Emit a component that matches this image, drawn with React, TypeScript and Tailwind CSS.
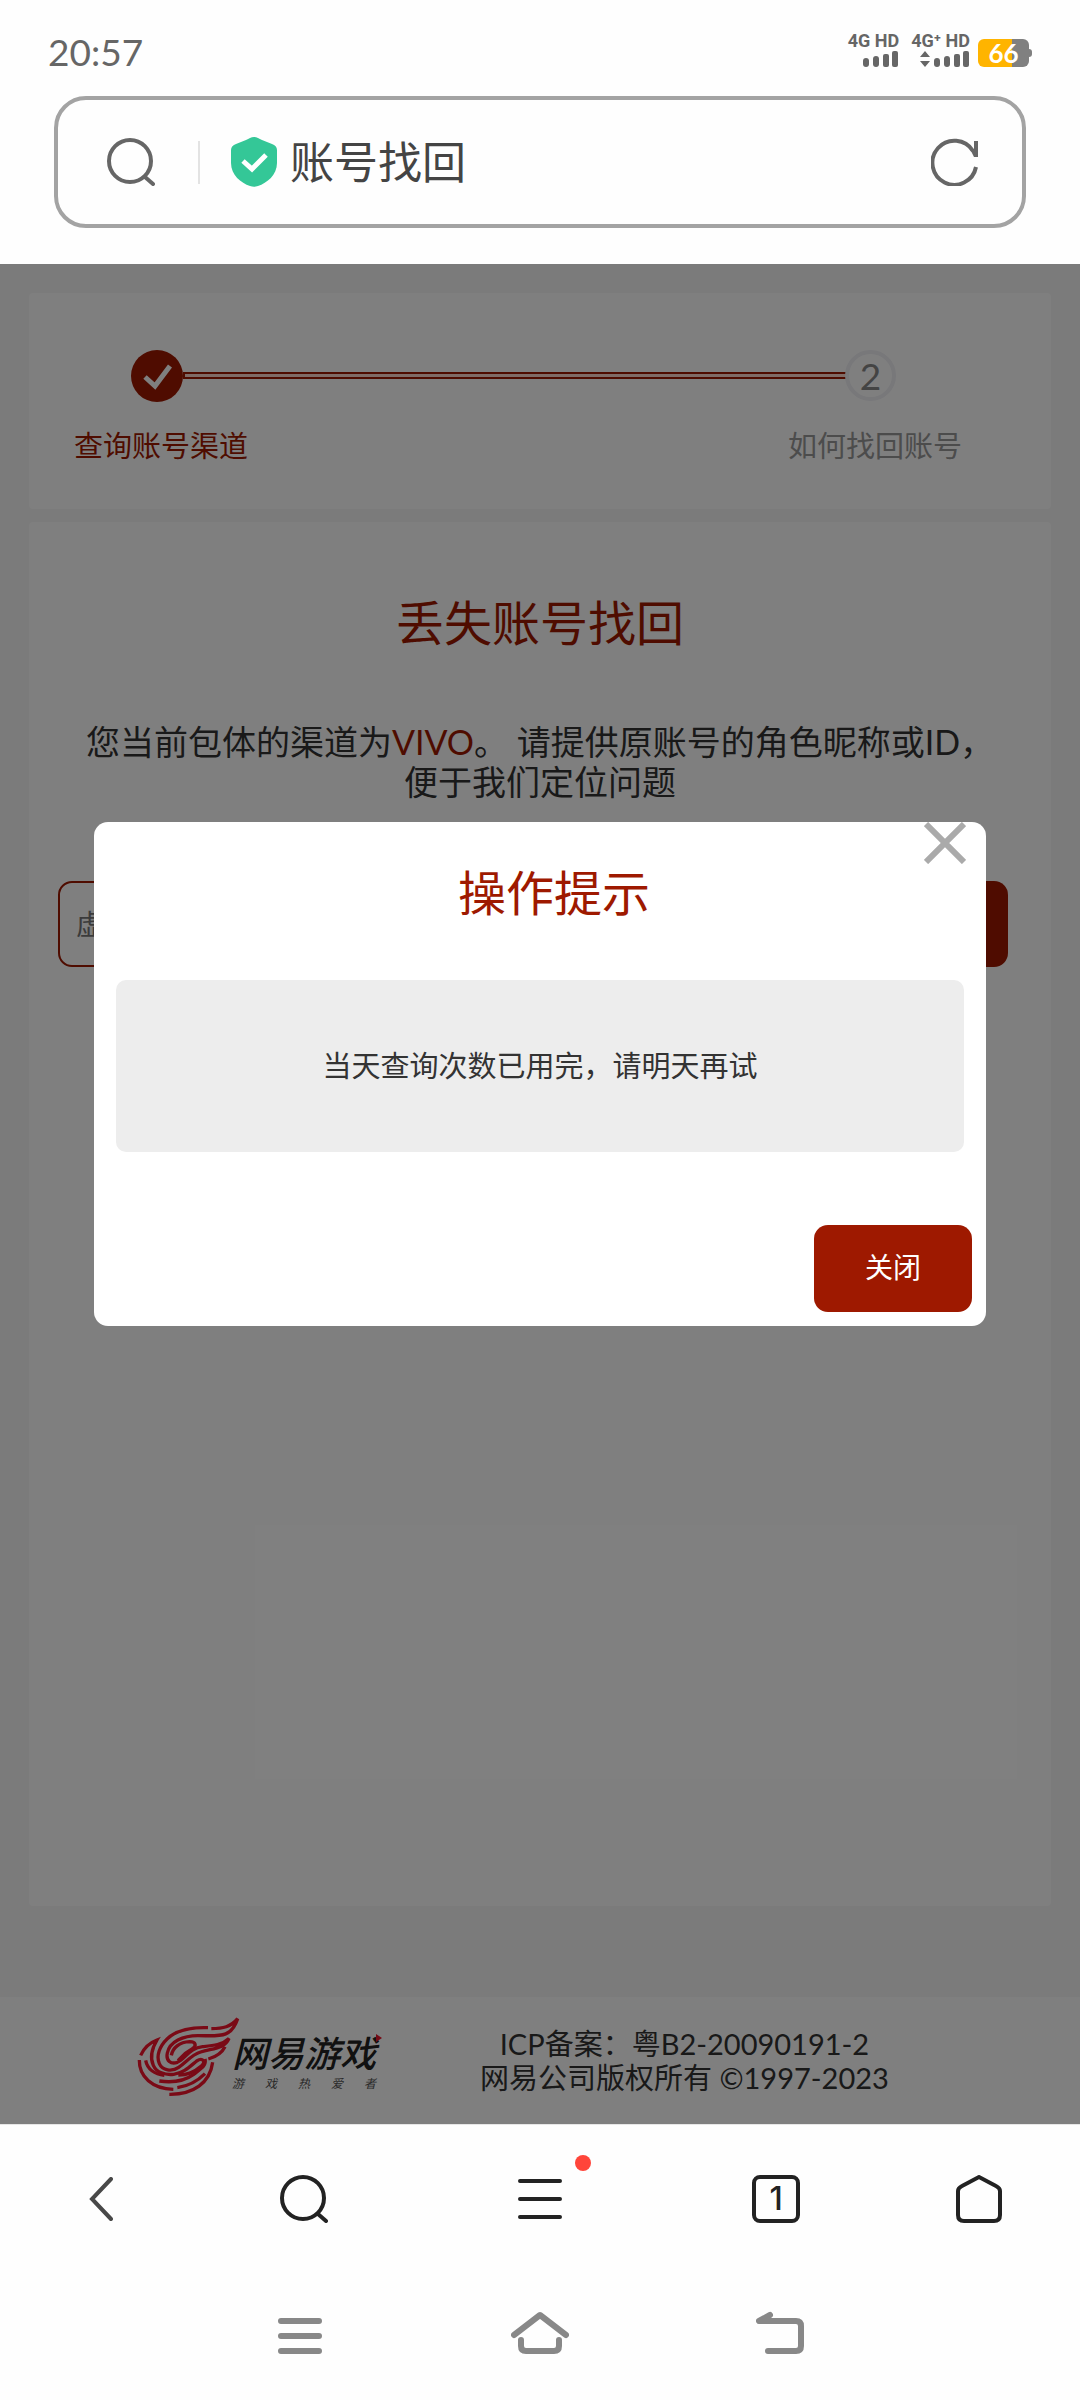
import React, { useState } from 'react';

const fontStack = "font-['Lato','Noto_Sans_CJK_SC',sans-serif]";

const SignalBars: React.FC = () => (
  <svg width="36" height="16" viewBox="0 0 36 16" fill="#666">
    <rect x="0" y="7" width="6" height="9" rx="3" />
    <rect x="10" y="5" width="6" height="11" rx="3" />
    <rect x="20" y="3" width="6" height="13" rx="2" />
    <rect x="29" y="0" width="6" height="16" rx="2" />
  </svg>
);

const StatusBar: React.FC = () => (
  <div className="flex items-start justify-between pt-8 pr-12 pl-12 text-[#666]">
    <span className="text-[37px] leading-10">20:57</span>
    <div className="flex items-start gap-3 font-['Roboto',sans-serif] text-lg leading-[18px] font-bold">
      <div className="flex flex-col items-end gap-px">
        <span>4G HD</span>
        <SignalBars />
      </div>
      <div className="flex flex-col items-end gap-px">
        <span>4G⁺ HD</span>
        <div className="flex items-center gap-1">
          <svg width="10" height="16" viewBox="0 0 10 16" fill="#666">
            <path d="M5 0 10 6H0ZM5 16 0 10h10Z" />
          </svg>
          <SignalBars />
        </div>
      </div>
      <div className="mt-[7px] -ml-1 flex items-center">
        <div className="flex h-7 w-[51px] items-center justify-center rounded-md bg-linear-to-r from-[#ffb400] from-66% to-[#808080] to-66% font-['Lato',sans-serif] text-[26px] text-white">
          66
        </div>
        <div className="h-2 w-[3px] rounded-r-sm bg-[#808080]" />
      </div>
    </div>
  </div>
);

const SearchIcon: React.FC<{ color: string }> = ({ color }) => (
  <svg width="48" height="48" viewBox="0 0 48 48" fill="none" stroke={color} strokeWidth="4" strokeLinecap="round">
    <circle cx="23" cy="23" r="21" />
    <path d="m38 39 8 7" />
  </svg>
);

const AddressBar: React.FC = () => (
  <div className="mx-[54px] mt-6 mb-9 flex h-[132px] items-center rounded-[32px] border-4 border-[#a3a3a3] pr-[43px] pl-[49px]">
    <button type="button" aria-label="搜索">
      <SearchIcon color="#666" />
    </button>
    <div className="ml-[43px] h-[43px] w-0.5 bg-[#e3e3e3]" />
    <svg className="ml-[31px]" width="46" height="50" viewBox="0 0 46 50">
      <path d="M23 0c3 0 5 1.500 8 3l10 4c3 1 5 3 5 6v13c0 12-10 20-19 23-3 1-5 1-8 0C10 46 0 38 0 26V13c0-3 2-5 5-6l10-4c3-1.500 5-3 8-3Z" fill="#34c797" />
      <path d="m12 24 9 8 14-14" fill="none" stroke="#fff" strokeWidth="5" />
    </svg>
    <span className="ml-[13px] flex-1 text-[44px] leading-[48px] text-[#444]">账号找回</span>
    <button type="button" aria-label="刷新">
      <svg width="48" height="48" viewBox="0 0 48 48" fill="none" stroke="#666" strokeWidth="4">
        <path d="M45 29A22 22 0 1 1 42 13" />
        <path d="M43 3h4v16h-4l-4-8 4 1Z" fill="#666" stroke="none" />
      </svg>
    </button>
  </div>
);

const Steps: React.FC = () => (
  <ol className="mx-[29px] mt-[29px] flex h-[216px] justify-between rounded-sm bg-white px-[45px] pt-[57px] text-[29px] leading-8">
    <li className="flex w-[174px] flex-none flex-col text-[#9e1900]">
      <div className="flex items-center pl-[57px]">
        <svg className="flex-none" width="52" height="52" viewBox="0 0 52 52">
          <circle cx="26" cy="26" r="26" fill="#9e1900" />
          <path d="m14 27 10 9 15-20" fill="none" stroke="#fff" strokeWidth="5" />
        </svg>
      </div>
      <span className="mt-7">查询账号渠道</span>
    </li>
    <li aria-hidden="true" className="mt-[22px] -mr-[60px] -ml-[65px] h-[7px] flex-1 border-2 border-[#9e1900] bg-[#ffd9cf]" />
    <li className="mr-11 flex w-[174px] flex-none flex-col text-[#999]">
      <div className="ml-[57px] flex size-[51px] items-center justify-center rounded-full border-4 border-[#f0f0f5] text-[37px] leading-10 text-[#888]">
        2
      </div>
      <span className="mt-[29px]">如何找回账号</span>
    </li>
  </ol>
);

const FlameLogo: React.FC = () => (
  <svg width="116" height="92" viewBox="0 0 348 276" fill="none" stroke="#f5142c" strokeWidth="10">
    <path d="M228 53c-55-2-95 8-122 33-24 23-34 52-24 75 9 21 38 25 58 11 24-17 39-38 66-46 41-12 72-10 85-41-21 20-48 22-79 25-40 4-52 37-76 47-19 7-35-5-30-28 7-34 47-52 92-52 65 0 99 9 119-51-21 25-44 30-79 30" />
    <path d="M118 136c4-22 24-40 55-41 19 0 22 13 7 22-23 12-31 24-42 35" />
    <path d="M26 136c9-20 25-37 49-46-18 30-20 56-11 76 9 21 35 30 61 27 31-4 49-24 69-40 18-12 29 2 15 14-24 20-42 28-70 28" />
    <path d="M41 151c5 26 27 42 56 45" />
    <path d="M22 150c-1 50 39 86 102 88" />
    <path d="M82 213c42 6 77-1 103-20 22-17 39-25 34-46" />
    <path d="M112 253c72 1 122-34 130-96M136 233c37-5 61-20 83-42M229 147c24-7 42-21 50-37" />
  </svg>
);

const PageFooter: React.FC = () => (
  <footer className="flex h-[127px] bg-white pl-[132px]">
    <div className="flex items-start pt-[13px]">
      <FlameLogo />
      <div className="-ml-4 pt-5">
        <div className="flex items-start">
          <span className="text-[36px] leading-[46px] font-medium text-[#222] italic">网易游戏</span>
          <svg className="mt-1" width="6" height="8" viewBox="0 0 6 8">
            <path d="M0 0 6 4 0 8Z" fill="#e8142a" />
          </svg>
        </div>
        <div className="flex w-[144px] justify-between text-xs leading-4 text-[#555] italic">
          {['游', '戏', '热', '爱', '者'].map(char => (
            <span key={char}>{char}</span>
          ))}
        </div>
      </div>
    </div>
    <p className="ml-[98px] pt-[30px] text-center text-[29px] leading-[34px] text-[#333]">
      ICP备案：粤B2-20090191-2
      <br />
      网易公司版权所有 ©1997-2023
    </p>
  </footer>
);

const RecoverForm: React.FC = () => {
  const [keyword, setKeyword] = useState('');

  return (
    <section className="mx-[29px] mt-[13px] mb-[91px] flex-1 rounded-sm bg-white px-[29px] pt-[73px]">
      <h1 className="text-center text-5xl leading-[56px] text-[#9e1900]">丢失账号找回</h1>
      <p className="mt-[71px] text-center text-[34px] leading-10 whitespace-nowrap text-[#333]">
        您当前包体的渠道为<span className="text-[#9e1900]">VIVO</span>。 请提供原账号的角色昵称或ID，
        <br />
        便于我们定位问题
      </p>
      <form className="mt-[79px] mr-[14px] flex h-[86px] gap-4" onSubmit={e => e.preventDefault()}>
        <input
          type="text"
          aria-label="角色昵称或ID"
          value={keyword}
          onChange={e => setKeyword(e.target.value)}
          placeholder="虚"
          className="min-w-0 flex-1 rounded-[14px] border-2 border-[#9e1900] px-4 text-[28px] placeholder:text-[#777]"
        />
        <button type="submit" aria-label="查询" className="w-[158px] rounded-[14px] bg-[#9e1900]" />
      </form>
    </section>
  );
};

const TipDialog: React.FC<{ onClose: () => void }> = ({ onClose }) => (
  <div className="absolute inset-0 flex items-start bg-black/50 px-[94px] pt-[558px]">
    <div role="dialog" aria-labelledby="tip-title" className="relative flex flex-1 flex-col rounded-[14px] bg-white px-[22px]">
      <button type="button" aria-label="关闭提示" onClick={onClose} className="absolute top-0 right-5">
        <svg width="42" height="42" viewBox="0 0 42 42" stroke="#aaa" strokeWidth="6">
          <path d="m2 2 38 38M40 2 2 40" />
        </svg>
      </button>
      <h2 id="tip-title" className="mt-[43px] pl-7 text-center text-5xl leading-[56px] text-[#9e1900]">
        操作提示
      </h2>
      <p className="mt-[59px] rounded-[10px] bg-[#ededed] py-[70px] text-center text-[29px] leading-8 text-[#333]">
        当天查询次数已用完，请明天再试
      </p>
      <button
        type="button"
        onClick={onClose}
        className="mt-[73px] -mr-2 mb-[14px] h-[87px] w-[158px] self-end rounded-[14px] bg-[#9e1900] pb-1 text-[28px] leading-8 text-white"
      >
        关闭
      </button>
    </div>
  </div>
);

const BrowserToolbar: React.FC = () => (
  <nav className="grid h-[148px] grid-cols-[3fr_3fr_4fr_3fr_3fr] place-items-center text-[#222]">
    <button type="button" aria-label="后退">
      <svg width="24" height="44" viewBox="0 0 24 44" fill="none" stroke="#484848" strokeWidth="4" strokeLinecap="round">
        <path d="M22 2 3 22l19 20" />
      </svg>
    </button>
    <button type="button" aria-label="搜索网页">
      <SearchIcon color="#222" />
    </button>
    <button type="button" aria-label="菜单" className="relative">
      <svg width="44" height="40" viewBox="0 0 44 40" stroke="#222" strokeWidth="4" strokeLinecap="round">
        <path d="M2 2h40M2 20h40M2 38h40" />
      </svg>
      <span className="absolute -top-6 -right-[29px] size-4 rounded-full bg-[#ff453a]" />
    </button>
    <button
      type="button"
      aria-label="标签页"
      className="flex size-12 items-center justify-center rounded-lg border-4 border-[#222] font-['Inter',sans-serif] text-[32px] leading-10 font-medium"
    >
      1
    </button>
    <button type="button" aria-label="主页">
      <svg width="46" height="48" viewBox="0 0 46 48" fill="none" stroke="#222" strokeWidth="4" strokeLinejoin="round">
        <path d="m23 2 17 9q4 2 4 5v24q0 6-6 6H8q-6 0-6-6V16q0-3 4-5Z" />
      </svg>
    </button>
  </nav>
);

const SystemNav: React.FC = () => (
  <nav className="flex h-[127px] justify-center pb-2">
    <button type="button" aria-label="最近任务" className="flex w-60 items-center justify-center">
      <svg width="46" height="44" viewBox="0 0 46 44" stroke="#888" strokeWidth="6" strokeLinecap="round">
        <path d="M4 10h38M4 25h38M4 40h38" />
      </svg>
    </button>
    <button type="button" aria-label="桌面" className="flex w-60 items-center justify-center">
      <svg width="58" height="44" viewBox="0 0 58 44" fill="none" stroke="#888" strokeWidth="6" strokeLinecap="round" strokeLinejoin="round">
        <path d="M3 24 29 4l26 20M10 29v6q0 5 5 5h28q5 0 5-5v-6" />
      </svg>
    </button>
    <button type="button" aria-label="返回" className="flex w-60 items-center justify-center">
      <svg width="48" height="44" viewBox="0 0 48 44" fill="none" stroke="#888" strokeWidth="6" strokeLinecap="round" strokeLinejoin="round">
        <path d="M14 4 3 10h37q5 0 5 5v20q0 5-5 5H12" />
      </svg>
    </button>
  </nav>
);

const App: React.FC = () => {
  const [showTip, setShowTip] = useState(true);

  return (
    <div className={`flex min-h-screen flex-col bg-[#fefefe] ${fontStack}`}>
      <header>
        <StatusBar />
        <AddressBar />
      </header>
      <main className="relative flex flex-1 flex-col bg-[#f6f6f6]">
        <Steps />
        <RecoverForm />
        <PageFooter />
        {showTip && <TipDialog onClose={() => setShowTip(false)} />}
      </main>
      <div className="border-t border-[#e6e6e6]">
        <BrowserToolbar />
        <SystemNav />
      </div>
    </div>
  );
};

export default App;
